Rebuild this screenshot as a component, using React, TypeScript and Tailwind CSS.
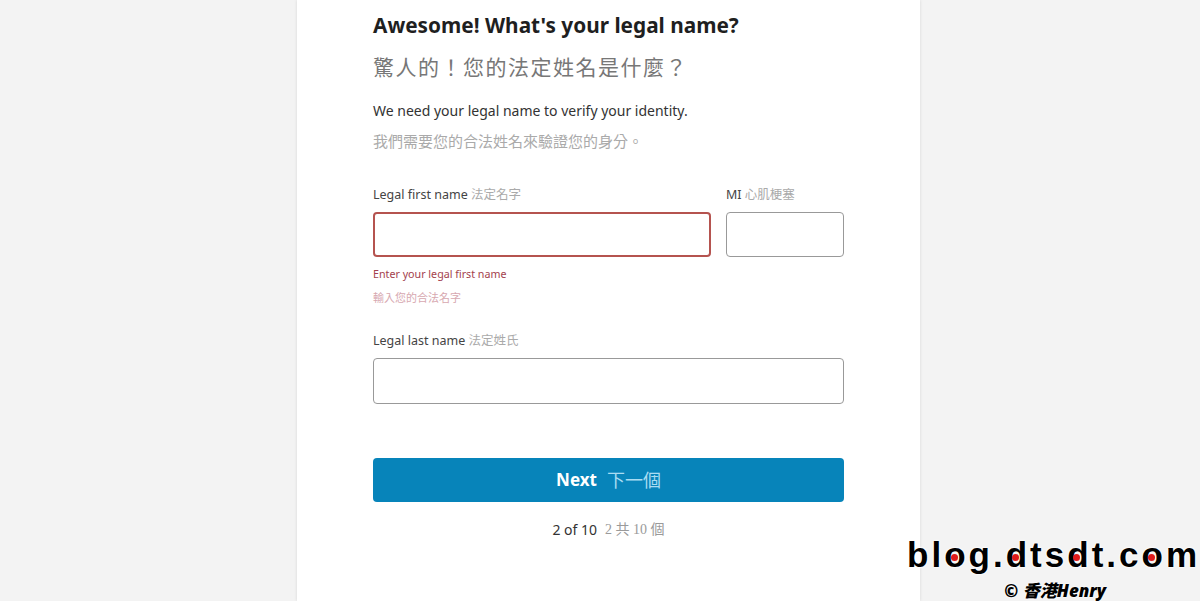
import React from 'react';

const sans = 'font-["Noto_Sans","Noto_Sans_CJK_TC",sans-serif]';

const Mark = () => {
  const chars = 'blog.dtsdt.com'.split('');
  return (
    <div className="pointer-events-none absolute right-0 bottom-0 flex flex-col items-end pb-[2px]">
      <div className="flex font-['Liberation_Sans',sans-serif] text-[35px] font-bold leading-none tracking-[3px] text-black [text-shadow:0_0_2px_#fff,0_0_2px_#fff,0_0_3px_#fff]">
        {chars.map((c, i) => (
          <span key={i} className="relative">
            {c}
            {(c === 'o' || c === 'd') && (
              <span
                className={`absolute top-[17px] h-[7px] w-[7px] rounded-full bg-[#e01b1b] ${
                  c === 'o' ? 'left-[7px]' : 'left-[6px]'
                }`}
              />
            )}
          </span>
        ))}
      </div>
      <div className="mt-[10px] mr-[94px] font-['Noto_Sans','Noto_Sans_CJK_TC',sans-serif] text-[17px] font-black italic leading-none text-black [text-shadow:0_0_2px_#fff,0_0_2px_#fff]">
        © 香港Henry
      </div>
    </div>
  );
};

const App = () => {
  return (
    <div className={`relative flex h-[601px] w-full overflow-hidden bg-[#f3f3f3] ${sans}`}>
      <div className="ml-[297px] h-full w-[623px] bg-white px-[76px] pt-[11px] shadow-[0_0_3px_rgba(0,0,0,0.12)]">
        <h1 className="text-[20.8px] font-bold leading-[28px] text-[#1f1f1f]">Awesome! What's your legal name?</h1>
        <h2 className="mt-[14px] text-[21px] leading-[28px] tracking-[1.5px] text-[#777]">驚人的！您的法定姓名是什麼？</h2>

        <p className="mt-[19px] text-[14px] leading-[22px] text-[#333]">We need your legal name to verify your identity.</p>
        <p className="mt-[8px] text-[15px] leading-[22px] text-[#aaa]">我們需要您的合法姓名來驗證您的身分。</p>

        <div className="mt-[33px] flex gap-[15px]">
          <div className="w-[338px]">
            <label className="block text-[12.5px] leading-[20px] text-[#444]">
              Legal first name <span className="text-[#aaa]">法定名字</span>
            </label>
            <input className="mt-[7px] block h-[45px] w-full rounded-[4px] border-2 border-[#b5534f] bg-white px-3 outline-none" />
            <p className="mt-[8px] text-[10.7px] leading-[18px] text-[#a3414d]">Enter your legal first name</p>
            <p className="mt-[6px] text-[11px] leading-[18px] text-[#d7a8b0]">輸入您的合法名字</p>
          </div>
          <div className="flex-1">
            <label className="block text-[12.5px] leading-[20px] text-[#444]">
              MI <span className="text-[#aaa]">心肌梗塞</span>
            </label>
            <input className="mt-[7px] block h-[45px] w-full rounded-[4px] border border-[#999] bg-white px-3 outline-none" />
          </div>
        </div>

        <div className="mt-[24px]">
          <label className="block text-[12.5px] leading-[20px] text-[#444]">
            Legal last name <span className="text-[#aaa]">法定姓氏</span>
          </label>
          <input className="mt-[7px] block h-[46px] w-full rounded-[4px] border border-[#999] bg-white px-3 outline-none" />
        </div>

        <button className="mt-[54px] flex h-[44px] w-full items-center justify-center gap-[10px] rounded-[4px] bg-[#0784ba]">
          <span className="text-[17px] font-bold text-white">Next</span>
          <span className="text-[18px] text-[#a9dcf2]">下一個</span>
        </button>

        <div className="mt-[18px] flex items-center justify-center gap-[8px] text-[14px] leading-[20px]">
          <span className="text-[#333]">2 of 10</span>
          <span className="font-['Liberation_Serif','Noto_Sans_CJK_TC',serif] text-[#9a9a9a]">2 共 10 個</span>
        </div>
      </div>
      <Mark />
    </div>
  );
};

export default App;
